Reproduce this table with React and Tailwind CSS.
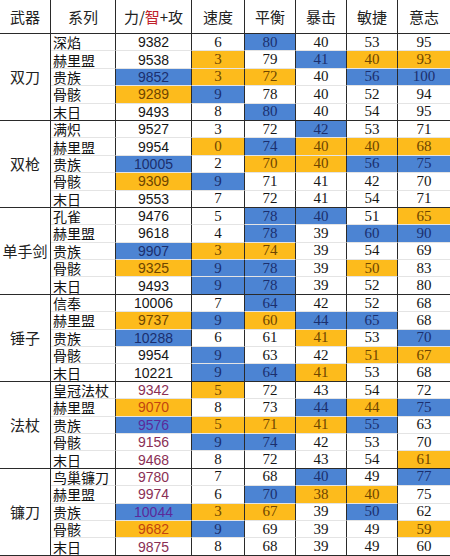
import React from "react";

const B = "b"; // blue
const O = "o"; // orange

const groups = [
  {
    name: "双刀",
    int: false,
    rows: [
      ["深焰", ["9382"], ["6"], ["80", B], ["40"], ["53"], ["95"]],
      ["赫里盟", ["9538"], ["3", O], ["79"], ["41", B], ["40", O], ["93", O]],
      ["贵族", ["9852", B], ["3", O], ["72", O], ["40"], ["56", B], ["100", B]],
      ["骨骸", ["9289", O], ["9", B], ["78"], ["40"], ["52"], ["94"]],
      ["末日", ["9493"], ["8"], ["80", B], ["40"], ["54"], ["95"]],
    ],
  },
  {
    name: "双枪",
    int: false,
    rows: [
      ["满炽", ["9527"], ["3"], ["72"], ["42", B], ["53"], ["71"]],
      ["赫里盟", ["9954"], ["0", O], ["74", B], ["40", O], ["40", O], ["68", O]],
      ["贵族", ["10005", B], ["2"], ["70", O], ["40", O], ["56", B], ["75", B]],
      ["骨骸", ["9309", O], ["9", B], ["71"], ["41"], ["42"], ["70"]],
      ["末日", ["9553"], ["7"], ["72"], ["41"], ["54"], ["71"]],
    ],
  },
  {
    name: "单手剑",
    int: false,
    rows: [
      ["孔雀", ["9476"], ["5"], ["78", B], ["40", B], ["51"], ["65", O]],
      ["赫里盟", ["9618"], ["4"], ["78", B], ["39"], ["60", B], ["90", B]],
      ["贵族", ["9907", B], ["3", O], ["74", O], ["39"], ["54"], ["69"]],
      ["骨骸", ["9325", O], ["9", B], ["78", B], ["39"], ["50", O], ["83"]],
      ["末日", ["9493"], ["9", B], ["78", B], ["39"], ["52"], ["80"]],
    ],
  },
  {
    name: "锤子",
    int: false,
    rows: [
      ["信奉", ["10006"], ["7"], ["64", B], ["42"], ["52"], ["68"]],
      ["赫里盟", ["9737", O], ["9", B], ["60", O], ["44", B], ["65", B], ["68"]],
      ["贵族", ["10288", B], ["6"], ["61"], ["41", O], ["53"], ["70", B]],
      ["骨骸", ["9954"], ["9", B], ["63"], ["42"], ["51", O], ["67", O]],
      ["末日", ["10221"], ["9", B], ["64", B], ["41", O], ["53"], ["68"]],
    ],
  },
  {
    name: "法杖",
    int: true,
    rows: [
      ["皇冠法杖", ["9342"], ["5", O], ["72"], ["43"], ["54"], ["72"]],
      ["赫里盟", ["9070", O], ["8"], ["73"], ["44", B], ["44", O], ["75", B]],
      ["贵族", ["9576", B], ["5", O], ["71", O], ["41", O], ["55", B], ["63"]],
      ["骨骸", ["9156"], ["9", B], ["74", B], ["42"], ["53"], ["70"]],
      ["末日", ["9468"], ["8"], ["72"], ["43"], ["54"], ["61", O]],
    ],
  },
  {
    name: "镰刀",
    int: true,
    rows: [
      ["鸟巢镰刀", ["9780"], ["7"], ["68"], ["40", B], ["49"], ["77", B]],
      ["赫里盟", ["9974"], ["6"], ["70", B], ["38", O], ["40", O], ["75"]],
      ["贵族", ["10044", B], ["3", O], ["67", O], ["39"], ["50", B], ["62"]],
      ["骨骸", ["9682", O], ["9", B], ["69"], ["39"], ["49"], ["59", O]],
      ["末日", ["9875"], ["8"], ["68"], ["39"], ["49"], ["60"]],
    ],
  },
];

const CJK = "font-['Noto_Sans_CJK_SC','Noto_Sans',sans-serif]";
const ARIAL = "font-['Liberation_Sans',Arial,sans-serif]";
const SERIF = "font-['Liberation_Serif','Times_New_Roman',serif]";

function bg(c) {
  if (c === B) return "bg-[#4c84d3]";
  if (c === O) return "bg-[#fdbb1c]";
  return "bg-white";
}
function fg(c) {
  if (c === B) return "text-[#1b2f6e]";
  if (c === O) return "text-[#6e4500]";
  return "text-[#161616]";
}
function fgInt(c) {
  if (c === B) return "text-[#5b2a9a]";
  if (c === O) return "text-[#c2450f]";
  return "text-[#8a2f55]";
}

export default function App() {
  const header = ["武器", "系列", null, "速度", "平衡", "暴击", "敏捷", "意志"];
  return (
    <div className="w-[450px] h-[556px] bg-white overflow-hidden">
      <div className="grid grid-cols-[51px_65px_76px_53px_51px_51px_51px_52px] grid-rows-[34px_repeat(30,17.4px)]">
        {header.map((h, i) => (
          <div
            key={"h" + i}
            className={
              "flex items-center justify-center border-b border-[#2a2a2a] text-[15px] text-[#222] leading-none " +
              CJK +
              (i < 7 ? " border-r" : "")
            }
          >
            {h === null ? (
              <span>
                力/<span className="text-[#c0202a]">智</span>+攻
              </span>
            ) : (
              h
            )}
          </div>
        ))}
        {groups.map((g) => (
          <React.Fragment key={g.name}>
            <div
              className={
                "row-span-5 flex items-center justify-center border-r border-b border-[#2a2a2a] text-[15px] text-[#222] leading-none " +
                CJK
              }
            >
              {g.name}
            </div>
            {g.rows.map((r, ri) => {
              const last = ri === 4;
              const bb = last ? "border-b border-[#2a2a2a]" : "border-b border-[#e4e4e4]";
              return (
                <React.Fragment key={ri}>
                  <div
                    className={
                      "flex items-center pl-[2px] border-r border-r-[#2a2a2a] text-[14px] text-[#111] leading-none whitespace-nowrap " +
                      CJK +
                      " " +
                      bb
                    }
                  >
                    {r[0]}
                  </div>
                  {r.slice(1).map((c, ci) => {
                    const isAtk = ci === 0;
                    const color = isAtk && g.int ? fgInt(c[1]) : fg(c[1]);
                    return (
                      <div
                        key={ci}
                        className={
                          "flex items-center justify-center leading-none " +
                          bg(c[1]) +
                          " " +
                          color +
                          " " +
                          bb +
                          (ci < 5 ? " border-r border-r-[#2a2a2a]" : "") +
                          (isAtk ? " text-[14px] " + ARIAL : " text-[15px] " + SERIF)
                        }
                      >
                        {c[0]}
                      </div>
                    );
                  })}
                </React.Fragment>
              );
            })}
          </React.Fragment>
        ))}
      </div>
    </div>
  );
}
